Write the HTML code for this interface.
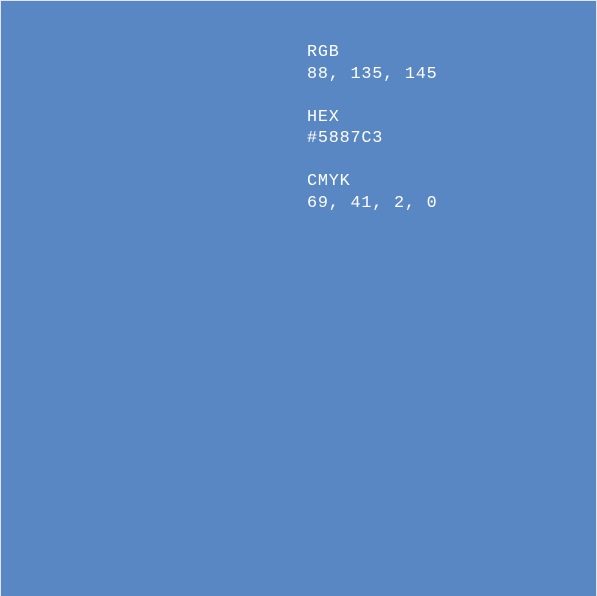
<!DOCTYPE html>
<html><head><meta charset="utf-8"><style>
html,body{margin:0;padding:0;width:597px;height:596px;overflow:hidden;background:#dfe6f2;}
.box{position:absolute;left:1px;top:1px;width:595px;height:595px;background:#5887C3;}
.t{position:absolute;left:307px;top:42px;color:#fff;font-family:"Liberation Mono",monospace;font-size:16.8px;letter-spacing:0.8px;line-height:21.5px;white-space:pre;}
</style></head><body><div class="box"></div><div class="t">RGB
88, 135, 145

HEX
#5887C3

CMYK
69, 41, 2, 0</div></body></html>
